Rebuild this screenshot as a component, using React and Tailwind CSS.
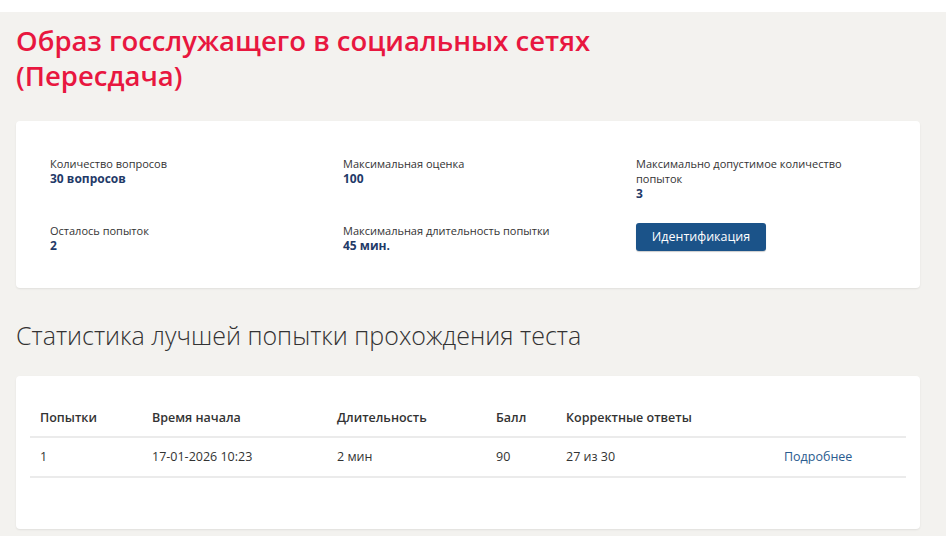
export default function App() {
  const info = [
    { label: "Количество вопросов", value: "30 вопросов" },
    { label: "Максимальная оценка", value: "100" },
    { label: "Максимально допустимое количество попыток", value: "3" },
    { label: "Осталось попыток", value: "2" },
    { label: "Максимальная длительность попытки", value: "45 мин." },
  ];

  return (
    <div
      className="min-h-[536px] bg-white pt-[12px]"
      style={{ fontFamily: '"Open Sans", "Noto Sans", sans-serif' }}
    >
      <div className="min-h-[524px] bg-[#f3f2ef] px-4 pt-[11px] pb-2">
        <h1 className="text-[27.5px] font-semibold leading-[35px] text-[#e8173f] w-[620px]">
          Образ госслужащего в социальных сетях (Пересдача)
        </h1>

        {/* Info card */}
        <div className="mt-[28px] w-[904px] rounded-[4px] bg-white shadow-[0_1px_2px_rgba(0,0,0,0.08)] pl-[34px] pt-[35px] pb-[35px]">
          <div className="grid grid-cols-[293px_293px_250px] gap-y-[20px]">
            {info.slice(0, 3).map((it) => (
              <div key={it.label} className="leading-[15px]">
                <div className="text-[11px] text-[#333]">{it.label}</div>
                <div className="text-[12px] font-bold text-[#1f3a68]">{it.value}</div>
              </div>
            ))}
            {info.slice(3).map((it) => (
              <div key={it.label} className="leading-[15px] pt-[2px]">
                <div className="text-[11px] text-[#333]">{it.label}</div>
                <div className="text-[12px] font-bold text-[#1f3a68]">{it.value}</div>
              </div>
            ))}
            <div className="pt-[2px]">
              <button className="h-[28px] w-[130px] rounded-[3px] bg-[#1b5389] text-[12.5px] text-white shadow-[0_1px_1px_rgba(0,0,0,0.2)]">
                Идентификация
              </button>
            </div>
          </div>
        </div>

        <h2 className="mt-[31px] text-[25px] font-light leading-[32px] text-[#333]">
          Статистика лучшей попытки прохождения теста
        </h2>

        {/* Table card */}
        <div className="mt-[25px] w-[904px] h-[153px] rounded-[4px] bg-white shadow-[0_1px_2px_rgba(0,0,0,0.08)] px-[14px] pt-[34px]">
          <table className="w-full table-fixed text-[12.5px] text-[#333] border-collapse">
            <thead>
              <tr className="border-b-2 border-[#ebebeb] text-left align-bottom">
                <th className="w-[122px] pl-[10px] pb-[10px] leading-[16px] font-semibold">Попытки</th>
                <th className="w-[185px] pb-[10px] leading-[16px] font-semibold">Время начала</th>
                <th className="w-[159px] pb-[10px] leading-[16px] font-semibold">Длительность</th>
                <th className="w-[70px] pb-[10px] leading-[16px] font-semibold">Балл</th>
                <th className="w-[218px] pb-[10px] leading-[16px] font-semibold">Корректные ответы</th>
                <th></th>
              </tr>
            </thead>
            <tbody>
              <tr className="border-b-2 border-[#ebebeb]">
                <td className="h-[40px] pl-[10px]">1</td>
                <td>17-01-2026 10:23</td>
                <td>2 мин</td>
                <td>90</td>
                <td>27 из 30</td>
                <td>
                  <a className="text-[#2b5c8f]" href="#">Подробнее</a>
                </td>
              </tr>
            </tbody>
          </table>
        </div>
      </div>
    </div>
  );
}
